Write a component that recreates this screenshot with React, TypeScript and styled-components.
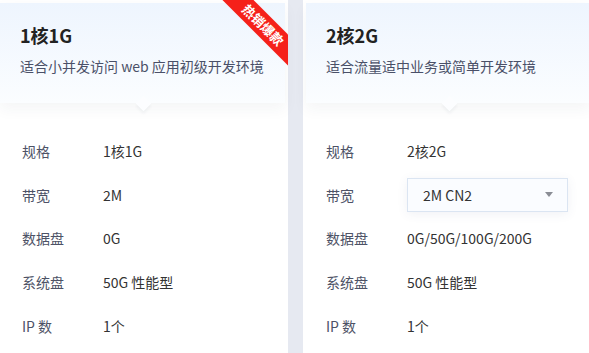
import React from 'react';
import styled, { createGlobalStyle } from 'styled-components';

const GlobalStyle = createGlobalStyle`
  html, body {
    margin: 0;
    padding: 0;
    background: #e6e9f1;
    font-family: 'Noto Sans CJK SC', 'Noto Sans', sans-serif;
    overflow: hidden;
  }
`;

const Page = styled.div`
  display: flex;
  gap: 15px;
  margin-left: -3px;
  width: 620px;
  height: 353px;
`;

const Card = styled.div`
  position: relative;
  width: 285px;
  flex-shrink: 0;
  border: 3px solid #fff;
  border-bottom: none;
  background: #fff;
  display: flex;
  flex-direction: column;
`;

const Header = styled.div`
  position: relative;
  z-index: 1;
  height: 100px;
  box-sizing: border-box;
  padding: 19px 20px 0;
  background: linear-gradient(180deg, #eef5fe 0%, #fbfdff 100%);
  box-shadow: 0 6px 14px rgba(40, 50, 80, 0.05);

  &::after {
    content: '';
    position: absolute;
    left: 50%;
    bottom: -6px;
    width: 11px;
    height: 11px;
    margin-left: -5px;
    background: #fcfdff;
    transform: rotate(45deg);
    box-shadow: 2px 2px 3px rgba(40, 50, 80, 0.05);
  }
`;

const Title = styled.div`
  font-size: 18px;
  line-height: 26px;
  font-weight: 700;
  color: #222;
`;

const Subtitle = styled.div`
  margin-top: 8px;
  font-size: 14px;
  line-height: 20px;
  color: #4a5068;
`;

const Ribbon = styled.div`
  position: absolute;
  top: -3px;
  right: -3px;
  width: 66px;
  height: 66px;
  overflow: hidden;
  z-index: 2;
`;

const RibbonBand = styled.div`
  position: absolute;
  left: -9px;
  top: 14px;
  width: 100px;
  height: 22px;
  background: #f5211a;
  color: #fff;
  font-size: 13px;
  line-height: 22px;
  font-weight: 700;
  text-align: center;
  transform: rotate(45deg);
`;

const Body = styled.div<{ $inset: number }>`
  padding: 26px 0 0 ${p => p.$inset}px;
  display: flex;
  flex-direction: column;
`;

const Row = styled.div`
  display: flex;
  align-items: center;
  height: 43.8px;
  font-size: 14px;
`;

const Label = styled.div`
  width: 81px;
  color: #4d5266;
`;

const Value = styled.div`
  color: #333;
`;

const Select = styled.div`
  width: 161px;
  height: 34px;
  box-sizing: border-box;
  border: 1px solid #dbe5f2;
  background: #fafcff;
  box-shadow: 0 2px 10px rgba(60, 80, 130, 0.08);
  display: flex;
  align-items: center;
  justify-content: space-between;
  padding: 0 14px 0 15px;
  color: #333;
  font-size: 14px;
`;

const Caret = styled.span`
  width: 0;
  height: 0;
  border-left: 4px solid transparent;
  border-right: 4px solid transparent;
  border-top: 5px solid #8a8d95;
`;

type Spec = { label: string; value: string; select?: boolean };

const plans: { title: string; desc: string; hot?: boolean; inset: number; specs: Spec[] }[] = [
  {
    title: '1核1G',
    desc: '适合小并发访问 web 应用初级开发环境',
    hot: true,
    inset: 22,
    specs: [
      { label: '规格', value: '1核1G' },
      { label: '带宽', value: '2M' },
      { label: '数据盘', value: '0G' },
      { label: '系统盘', value: '50G 性能型' },
      { label: 'IP 数', value: '1个' },
    ],
  },
  {
    title: '2核2G',
    desc: '适合流量适中业务或简单开发环境',
    inset: 20,
    specs: [
      { label: '规格', value: '2核2G' },
      { label: '带宽', value: '2M CN2', select: true },
      { label: '数据盘', value: '0G/50G/100G/200G' },
      { label: '系统盘', value: '50G 性能型' },
      { label: 'IP 数', value: '1个' },
    ],
  },
];

const App: React.FC = () => {
  return (
    <>
      <GlobalStyle />
      <Page>
        {plans.map(p => (
          <Card key={p.title}>
            <Header>
              <Title>{p.title}</Title>
              <Subtitle>{p.desc}</Subtitle>
            </Header>
            {p.hot && (
              <Ribbon>
                <RibbonBand>热销爆款</RibbonBand>
              </Ribbon>
            )}
            <Body $inset={p.inset}>
              {p.specs.map(s => (
                <Row key={s.label}>
                  <Label>{s.label}</Label>
                  {s.select ? (
                    <Select>
                      {s.value}
                      <Caret />
                    </Select>
                  ) : (
                    <Value>{s.value}</Value>
                  )}
                </Row>
              ))}
            </Body>
          </Card>
        ))}
      </Page>
    </>
  );
};

export default App;
